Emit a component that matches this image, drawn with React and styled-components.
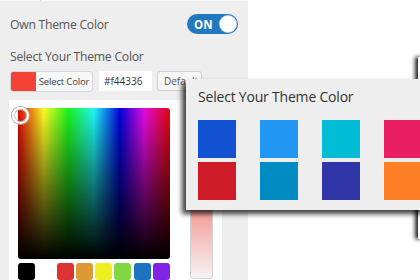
import React from "react";
import styled, { createGlobalStyle } from "styled-components";

const Global = createGlobalStyle`
  html, body { margin: 0; padding: 0; background: #fff; overflow: hidden; }
  body { font-family: "Open Sans", "Noto Sans", sans-serif; }
  * { box-sizing: border-box; }
`;

const Page = styled.div`
  position: relative;
  width: 420px;
  height: 280px;
  display: flex;
  overflow: hidden;
`;

const Sidebar = styled.div`
  width: 248px;
  height: 280px;
  background: #eeeeee;
  display: flex;
  flex-direction: column;
`;

const Tabs = styled.div`
  height: 2px;
  display: flex;
  background: #f6f6f6;
`;

const Tab = styled.div`
  width: 41px;
  border-right: 1px solid #d6d6d6;
`;

const Content = styled.div`
  padding: 12px 10px 0 10px;
  display: flex;
  flex-direction: column;
`;

const OptionRow = styled.div`
  display: flex;
  align-items: center;
  justify-content: space-between;
  height: 22px;
`;

const Label = styled.span`
  font-size: 12.2px;
  color: #555;
  letter-spacing: -0.25px;
`;

const Toggle = styled.div`
  position: relative;
  width: 51px;
  height: 20px;
  border-radius: 10px;
  background: #2279bf;
  display: flex;
  align-items: center;
  padding-left: 7px;
  color: #fff;
  font-size: 11.5px;
  font-weight: 700;
`;

const Knob = styled.span`
  position: absolute;
  right: 2px;
  top: 2px;
  width: 16px;
  height: 16px;
  border-radius: 50%;
  background: #fff;
  box-shadow: 0 0 0 1px #c9d9e8;
`;

const SectionLabel = styled(Label)`
  margin-top: 13px;
  display: block;
  line-height: 18px;
`;

const ControlRow = styled.div`
  display: flex;
  align-items: center;
  margin-top: 5px;
  height: 20px;
`;

const ColorButton = styled.div`
  display: flex;
  width: 83px;
  height: 21px;
  border: 1px solid #cfd6dc;
  border-radius: 3px;
  overflow: hidden;
  background: #f6f7f7;
`;

const ColorChip = styled.span`
  width: 25px;
  flex: none;
  background: ${(p) => p.$color};
`;

const ButtonText = styled.span`
  flex: 1;
  display: flex;
  align-items: center;
  justify-content: center;
  font-size: 9.6px;
  color: #444;
  letter-spacing: -0.2px;
  white-space: nowrap;
`;

const HexInput = styled.div`
  margin-left: 6px;
  width: 53px;
  height: 20px;
  background: #fff;
  display: flex;
  align-items: center;
  padding-left: 5px;
  font-size: 10px;
  color: #333;
`;

const DefaultButton = styled.div`
  margin-left: 5px;
  width: 45px;
  height: 20px;
  border: 1px solid #cfcfcf;
  border-radius: 3px;
  background: #f6f6f6;
  display: flex;
  align-items: center;
  padding-left: 6px;
  font-size: 10px;
  color: #555;
`;

const PickerBox = styled.div`
  margin-top: 9px;
  margin-left: 9px;
  width: 213px;
  flex: 1;
  background: #fff;
  padding: 8px 0 0 9px;
  display: flex;
  gap: 20px;
`;

const PickerMain = styled.div`
  display: flex;
  flex-direction: column;
  gap: 4px;
`;

const Square = styled.div`
  position: relative;
  width: 152px;
  height: 151px;
  border-radius: 3px;
  background:
    linear-gradient(to bottom, rgba(0,0,0,0) 0%, rgba(0,0,0,1) 100%),
    linear-gradient(to right, #ff0000 0%, #ffff00 17%, #00ff00 33%, #00ffff 50%, #0000ff 67%, #ff00ff 83%, #ff0000 100%);
  filter: saturate(0.85);
`;

const Marker = styled.span`
  position: absolute;
  left: -6px;
  top: -1px;
  width: 17px;
  height: 17px;
  border-radius: 50%;
  border: 2px solid #fff;
  box-shadow: 0 0 0 1px #aaa, inset 0 0 0 1px #bbb;
`;

const Palette = styled.div`
  display: grid;
  grid-template-columns: repeat(8, 17px);
  justify-content: space-between;
`;

const PaletteSwatch = styled.span`
  height: 17px;
  border-radius: 3px;
  background: ${(p) => p.$color};
`;

const Slider = styled.div`
  width: 23px;
  height: 171px;
  border: 1px solid #d4d4d4;
  border-radius: 3px;
  background: linear-gradient(to bottom, #f44336 0%, #f4a19c 62%, #f6f2f2 100%);
`;

const WhiteArea = styled.div`
  flex: 1;
  background: #fff;
`;

const BackCard = styled.div`
  position: absolute;
  left: 418px;
  top: 57px;
  width: 100px;
  height: 182px;
  background: #fff;
  box-shadow: -3px 0 4px rgba(0, 0, 0, 0.85);
  z-index: 1;
`;

const Popup = styled.div`
  position: absolute;
  left: 186px;
  top: 79px;
  width: 250px;
  height: 131px;
  background: #eeeeee;
  box-shadow: -4px 4px 5px rgba(0, 0, 0, 0.75);
  padding: 8px 0 0 12px;
  z-index: 2;
`;

const PopupTitle = styled.div`
  font-size: 14px;
  color: #333;
  line-height: 20px;
  letter-spacing: -0.2px;
`;

const ThemeGrid = styled.div`
  margin-top: 13px;
  display: grid;
  grid-template-columns: repeat(4, 38px);
  column-gap: 24px;
  row-gap: 4px;
`;

const ThemeSwatch = styled.span`
  width: 38px;
  height: 38px;
  background: ${(p) => p.$color};
`;

const palette = ["#000000", "#ffffff", "#dd3333", "#dd9933", "#eeee22", "#81d742", "#1e73be", "#8224e3"];
const themes = ["#1152d2", "#2196f3", "#00bcd4", "#e91e63", "#cf1b27", "#008cc3", "#3035a8", "#ff7f27"];

export default function App() {
  return (
    <>
      <Global />
      <Page>
        <Sidebar>
          <Tabs>
            <Tab />
          </Tabs>
          <Content>
            <OptionRow>
              <Label>Own Theme Color</Label>
              <Toggle>
                ON
                <Knob />
              </Toggle>
            </OptionRow>
            <SectionLabel>Select Your Theme Color</SectionLabel>
            <ControlRow>
              <ColorButton>
                <ColorChip $color="#f44336" />
                <ButtonText>Select Color</ButtonText>
              </ColorButton>
              <HexInput>#f44336</HexInput>
              <DefaultButton>Default</DefaultButton>
            </ControlRow>
          </Content>
          <PickerBox>
            <PickerMain>
              <Square>
                <Marker />
              </Square>
              <Palette>
                {palette.map((c) => (
                  <PaletteSwatch key={c} $color={c} />
                ))}
              </Palette>
            </PickerMain>
            <Slider />
          </PickerBox>
        </Sidebar>
        <WhiteArea />
        <BackCard />
        <Popup>
          <PopupTitle>Select Your Theme Color</PopupTitle>
          <ThemeGrid>
            {themes.map((c) => (
              <ThemeSwatch key={c} $color={c} />
            ))}
          </ThemeGrid>
        </Popup>
      </Page>
    </>
  );
}
